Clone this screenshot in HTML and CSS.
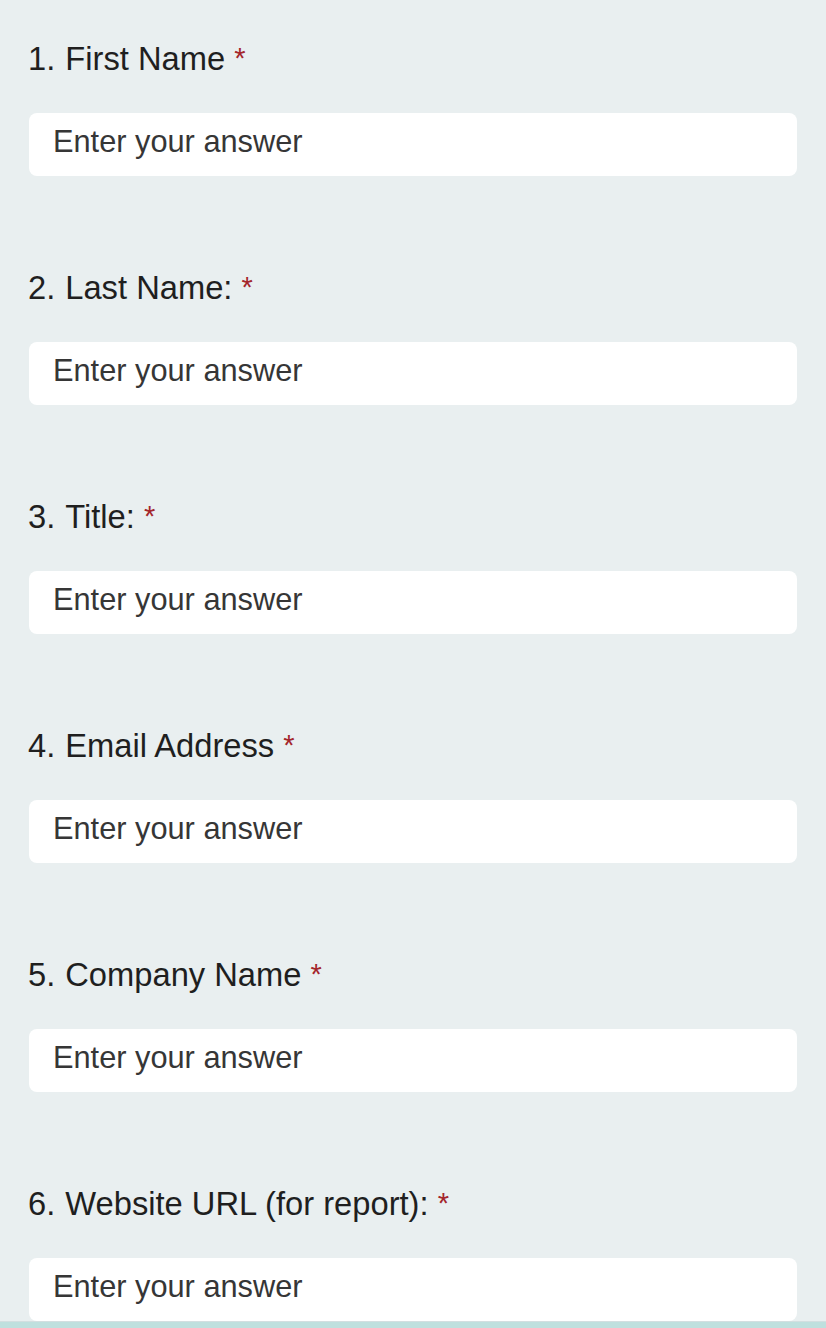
FILE: index.html
```html
<!DOCTYPE html>
<html lang="en">
<head>
<meta charset="utf-8">
<title>Form</title>
<link rel="stylesheet" href="styles.css">
</head>
<body>
<main class="form">
  <section class="question">
    <div class="label"><span class="num">1.</span>First Name <span class="req">*</span></div>
    <div class="answer">Enter your answer</div>
  </section>
  <section class="question">
    <div class="label"><span class="num">2.</span>Last Name: <span class="req">*</span></div>
    <div class="answer">Enter your answer</div>
  </section>
  <section class="question">
    <div class="label"><span class="num">3.</span>Title: <span class="req">*</span></div>
    <div class="answer">Enter your answer</div>
  </section>
  <section class="question">
    <div class="label"><span class="num">4.</span>Email Address <span class="req">*</span></div>
    <div class="answer">Enter your answer</div>
  </section>
  <section class="question">
    <div class="label"><span class="num">5.</span>Company Name <span class="req">*</span></div>
    <div class="answer">Enter your answer</div>
  </section>
  <section class="question">
    <div class="label"><span class="num">6.</span>Website URL (for report): <span class="req">*</span></div>
    <div class="answer">Enter your answer</div>
  </section>
</main>
<div class="bottom-strip"></div>
</body>
</html>
```

FILE: styles.css
```css
html, body {
  margin: 0;
  padding: 0;
}
body {
  background: #e9eff0;
  font-family: "Liberation Sans", Arial, sans-serif;
  height: 1328px;
  overflow: hidden;
  display: flex;
  flex-direction: column;
}
.form {
  flex: 1;
  padding: 38px 29px 0 29px;
  display: flex;
  flex-direction: column;
  gap: 91px;
}
.question {
  display: flex;
  flex-direction: column;
  gap: 34px;
}
.label {
  font-size: 32.7px;
  line-height: 40px;
  color: #1f1f1f;
  margin-left: -1px;
  white-space: nowrap;
}
.num {
  display: inline-block;
  margin-right: 10px;
}
.req {
  color: #a4262c;
  font-size: 29px;
  vertical-align: 2px;
}
.answer {
  background: #ffffff;
  border-radius: 8px;
  height: 63px;
  box-sizing: border-box;
  padding: 0 22px 5px 24px;
  font-size: 30.75px;
  line-height: 58px;
  color: #363636;
}
.bottom-strip {
  height: 7px;
  background: #bfe0de;
  border-top: 1px solid #d3dfe0;
}
```
